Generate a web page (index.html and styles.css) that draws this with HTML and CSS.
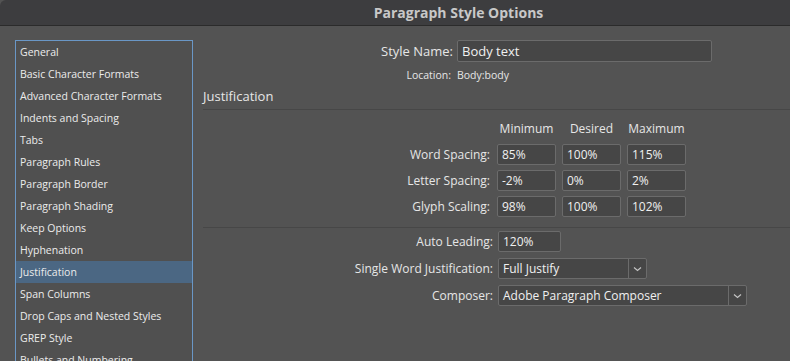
FILE: index.html
```html
<!DOCTYPE html>
<html lang="en">
<head>
    <meta charset="UTF-8">
    <link rel="stylesheet" href="styles.css">
</head>
<body>
    <div class="titlebar">
        <h1>Paragraph Style Options</h1>
    </div>

    <div class="dialog">
        <ul class="sidebar">
            <li>General</li>
            <li>Basic Character Formats</li>
            <li>Advanced Character Formats</li>
            <li>Indents and Spacing</li>
            <li>Tabs</li>
            <li>Paragraph Rules</li>
            <li>Paragraph Border</li>
            <li>Paragraph Shading</li>
            <li>Keep Options</li>
            <li>Hyphenation</li>
            <li class="active">Justification</li>
            <li>Span Columns</li>
            <li>Drop Caps and Nested Styles</li>
            <li>GREP Style</li>
            <li>Bullets and Numbering</li>
            <li>Character Color</li>
        </ul>

        <div class="panel">
            <div class="name-row">
                <label>Style Name:</label>
                <div class="field name-field">Body text</div>
            </div>
            <div class="location-row">
                <span class="loc-label">Location:</span>
                <span>Body:body</span>
            </div>

            <h2 class="section-title">Justification</h2>

            <div class="spacing-grid">
                <span></span>
                <span class="col-head">Minimum</span>
                <span class="col-head">Desired</span>
                <span class="col-head">Maximum</span>

                <label>Word Spacing:</label>
                <div class="field">85%</div>
                <div class="field">100%</div>
                <div class="field">115%</div>

                <label>Letter Spacing:</label>
                <div class="field">-2%</div>
                <div class="field">0%</div>
                <div class="field">2%</div>

                <label>Glyph Scaling:</label>
                <div class="field">98%</div>
                <div class="field">100%</div>
                <div class="field">102%</div>
            </div>

            <div class="options">
                <label>Auto Leading:</label>
                <div><div class="field leading-field">120%</div></div>

                <label>Single Word Justification:</label>
                <div class="select short-select">
                    <span class="select-value">Full Justify</span>
                    <span class="select-arrow">
                        <svg width="9" height="6" viewBox="0 0 9 6"><path d="M1 1.5 L4.5 4.5 L8 1.5" fill="none" stroke="#c4c4c4" stroke-width="1.2"/></svg>
                    </span>
                </div>

                <label>Composer:</label>
                <div class="select long-select">
                    <span class="select-value">Adobe Paragraph Composer</span>
                    <span class="select-arrow">
                        <svg width="9" height="6" viewBox="0 0 9 6"><path d="M1 1.5 L4.5 4.5 L8 1.5" fill="none" stroke="#c4c4c4" stroke-width="1.2"/></svg>
                    </span>
                </div>
            </div>
        </div>
    </div>
</body>
</html>
```

FILE: styles.css
```css
body {
    margin: 0;
    height: 100vh;
    overflow: hidden;
    background-color: #535353;
    font-family: "Open Sans", "DejaVu Sans", sans-serif;
    color: #e6e6e6;
    display: flex;
    flex-direction: column;
}

.titlebar {
    height: 25px;
    background-color: #3d3d3f;
    border-bottom: 1px solid #2b2b2b;
    border-top-left-radius: 6px;
    padding-left: 127px;
    display: flex;
    align-items: center;
    justify-content: center;
}

.titlebar h1 {
    margin: 0;
    font-size: 14px;
    font-weight: bold;
    color: #c8c8c8;
}

.dialog {
    flex: 1;
    display: flex;
    padding: 14px 0 0 15px;
    min-height: 0;
}

.sidebar {
    list-style: none;
    margin: 0;
    padding: 0;
    width: 176px;
    border: 1px solid #6a97c6;
    border-bottom: none;
    background-color: #505050;
    overflow: hidden;
    flex-shrink: 0;
}

.sidebar li {
    height: 22px;
    line-height: 22px;
    padding-left: 4px;
    font-size: 10.5px;
    color: #ececec;
    white-space: nowrap;
}

.sidebar li.active {
    background-color: #4b6783;
}

.panel {
    flex: 1;
    margin-left: 10px;
    font-size: 12px;
}

.field {
    height: 19px;
    line-height: 19px;
    background-color: #464646;
    border: 1px solid #6b6b6b;
    border-radius: 2px;
    padding-left: 4px;
    color: #f0f0f0;
    font-size: 12px;
    box-sizing: content-box;
}

.name-row {
    display: flex;
    align-items: center;
}

.name-row label {
    width: 250px;
    text-align: right;
    font-size: 13px;
}

.name-field {
    margin-left: 4px;
    width: 249px;
    height: 20px;
    line-height: 20px;
    font-size: 13px;
}

.location-row {
    display: flex;
    font-size: 10.5px;
    margin-top: 5px;
    height: 16px;
    align-items: center;
}

.loc-label {
    width: 248px;
    text-align: right;
    margin-right: 6px;
}

.section-title {
    margin: 2px 0 0;
    font-size: 13px;
    font-weight: normal;
    height: 24px;
    line-height: 22px;
    border-bottom: 1px solid #474747;
}

.spacing-grid {
    display: grid;
    grid-template-columns: 288px 59px 59px 59px;
    column-gap: 6px;
    row-gap: 5px;
    align-items: center;
    padding-top: 10px;
    padding-bottom: 10px;
    border-bottom: 1px solid #474747;
}

.spacing-grid label {
    text-align: right;
    margin-right: 1px;
}

.spacing-grid .field {
    width: 53px;
}

.col-head {
    text-align: center;
    font-size: 12px;
    height: 19px;
}

.options {
    display: grid;
    grid-template-columns: 290px auto;
    column-gap: 5px;
    row-gap: 6px;
    align-items: center;
    justify-items: start;
    padding-top: 3px;
}

.options label {
    justify-self: end;
}

.leading-field {
    width: 57px;
}

.select {
    display: flex;
    height: 19px;
    border: 1px solid #6b6b6b;
    border-radius: 2px;
    background-color: #464646;
}

.short-select {
    width: 147px;
}

.long-select {
    width: 247px;
}

.select-value {
    flex: 1;
    line-height: 19px;
    padding-left: 4px;
    font-size: 12px;
    color: #f0f0f0;
}

.select-arrow {
    width: 17px;
    border-left: 1px solid #6b6b6b;
    display: flex;
    align-items: center;
    justify-content: center;
}
```
